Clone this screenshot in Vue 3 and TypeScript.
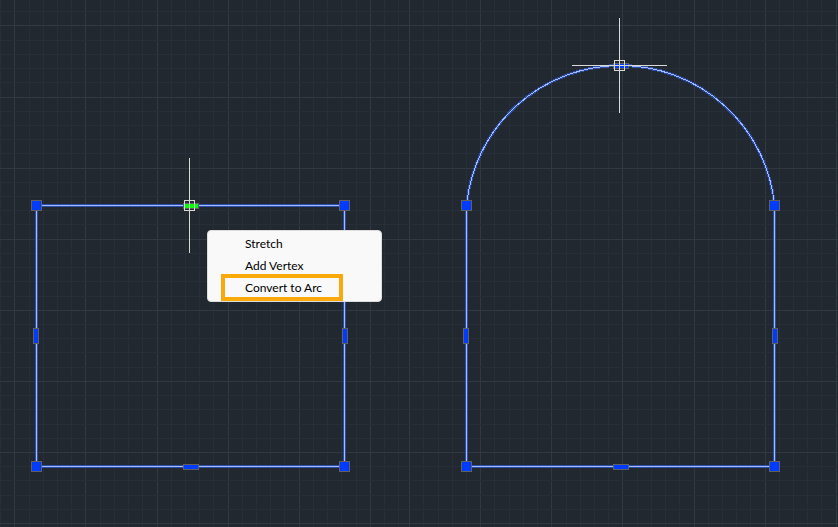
<script setup lang="ts">
interface GridLine {
  at: number
  major: boolean
}

interface Grip {
  x: number
  y: number
  w: number
  h: number
}

const STEP = 14.22
const SEAM = 405
const SPAN = 4000

function gridLines(base: number, from: number, to: number): GridLine[] {
  const lines: GridLine[] = []
  const first = Math.ceil((from - base) / STEP)
  for (let k = first; base + k * STEP < to; k++) {
    lines.push({ at: Math.round(base + k * STEP) + 0.5, major: k % 5 === 0 })
  }
  return lines.sort((a, b) => Number(a.major) - Number(b.major))
}

const columns = [
  ...gridLines(14.3, 0, SEAM),
  ...gridLines(622.4, SEAM, SPAN),
].sort((a, b) => Number(a.major) - Number(b.major))
const rows = gridLines(25.4, 0, SPAN)

const outlines = [
  'M36.5 205.5H344.5V466.5H36.5Z',
  'M466.5 205.5V466.5H774.5V205.5A154.7 154.7 0 0 0 466.5 205.5Z',
]

function shapeGrips(left: number): Grip[] {
  const right = left + 308
  return [
    { x: left - 5, y: 200, w: 10, h: 10 },
    { x: right - 5, y: 200, w: 10, h: 10 },
    { x: left - 5, y: 461, w: 10, h: 10 },
    { x: right - 5, y: 461, w: 10, h: 10 },
    { x: left - 3, y: 328, w: 5, h: 15 },
    { x: right - 2, y: 328, w: 5, h: 15 },
    { x: left + 147, y: 464, w: 15, h: 5 },
  ]
}

const grips = [...shapeGrips(36), ...shapeGrips(466)]
const commands = ['Stretch', 'Add Vertex', 'Convert to Arc']
</script>

<template>
  <main class="workspace">
    <svg class="drawing" aria-hidden="true">
      <g class="grid">
        <path v-for="c in columns" :key="`c${c.at}`" :class="{ major: c.major }" :d="`M${c.at} 0V${SPAN}`" />
        <path v-for="r in rows" :key="`r${r.at}`" :class="{ major: r.major }" :d="`M0 ${r.at}H${SPAN}`" />
      </g>
      <g v-for="d in outlines" :key="d" class="outline">
        <path class="glow" :d="d" />
        <path class="core" :d="d" />
      </g>
      <rect
        v-for="g in grips"
        :key="`${g.x}-${g.y}`"
        class="grip"
        :x="g.x + 0.5"
        :y="g.y + 0.5"
        :width="g.w"
        :height="g.h"
      />
      <rect class="grip hot" x="183.5" y="203.5" width="15" height="5" />
      <rect class="grip" x="613.5" y="63.5" width="15" height="5" />
      <path class="cursor" d="M189.5 158V253M184.5 200.5H194.5V210.5H184.5Z" />
      <path class="cursor" d="M619.5 18V113M572 65.5H667M614.5 60.5H624.5V70.5H614.5Z" />
    </svg>
    <ul class="menu">
      <li v-for="(command, i) in commands" :key="command">
        <button type="button" :class="{ marked: i === 2 }">{{ command }}</button>
      </li>
    </ul>
  </main>
</template>

<style>
body {
  margin: 0;
  background: #212830;
}
</style>

<style scoped>
.workspace {
  position: relative;
  height: 100vh;
  overflow: hidden;
  background: #212830;
}

.drawing {
  display: block;
  width: 100%;
  height: 100%;
  fill: none;
  shape-rendering: crispEdges;
}

.grid path {
  stroke: #272e37;
}

.grid .major {
  stroke: #303842;
}

.glow {
  stroke: #2b4da8;
  stroke-width: 3;
}

.core {
  stroke: #a6baff;
}

.grip {
  fill: #003cff;
  stroke: #5f6064;
}

.hot {
  fill: #00ff00;
}

.cursor {
  stroke: #d8d8d4;
}

.menu {
  position: absolute;
  top: 230px;
  left: 207px;
  box-sizing: border-box;
  width: 175px;
  margin: 0;
  padding: 3px 14px 0;
  list-style: none;
  border: 1px solid #dcdcdc;
  border-radius: 4px;
  background: #f9f9f9;
}

.menu li {
  height: 22px;
}

.menu li:last-child {
  height: 23px;
}

.menu button {
  box-sizing: border-box;
  display: block;
  width: 121px;
  height: 22px;
  padding: 0 0 2px 23px;
  border: 0;
  background: none;
  color: #000;
  font: 12px/20px Lato, "Open Sans", sans-serif;
  text-align: left;
  white-space: nowrap;
}

.menu .marked {
  position: relative;
}

.menu .marked::after {
  content: "";
  position: absolute;
  inset: -4px 0 -1px -1px;
  border: 4px solid #faa90b;
}
</style>
